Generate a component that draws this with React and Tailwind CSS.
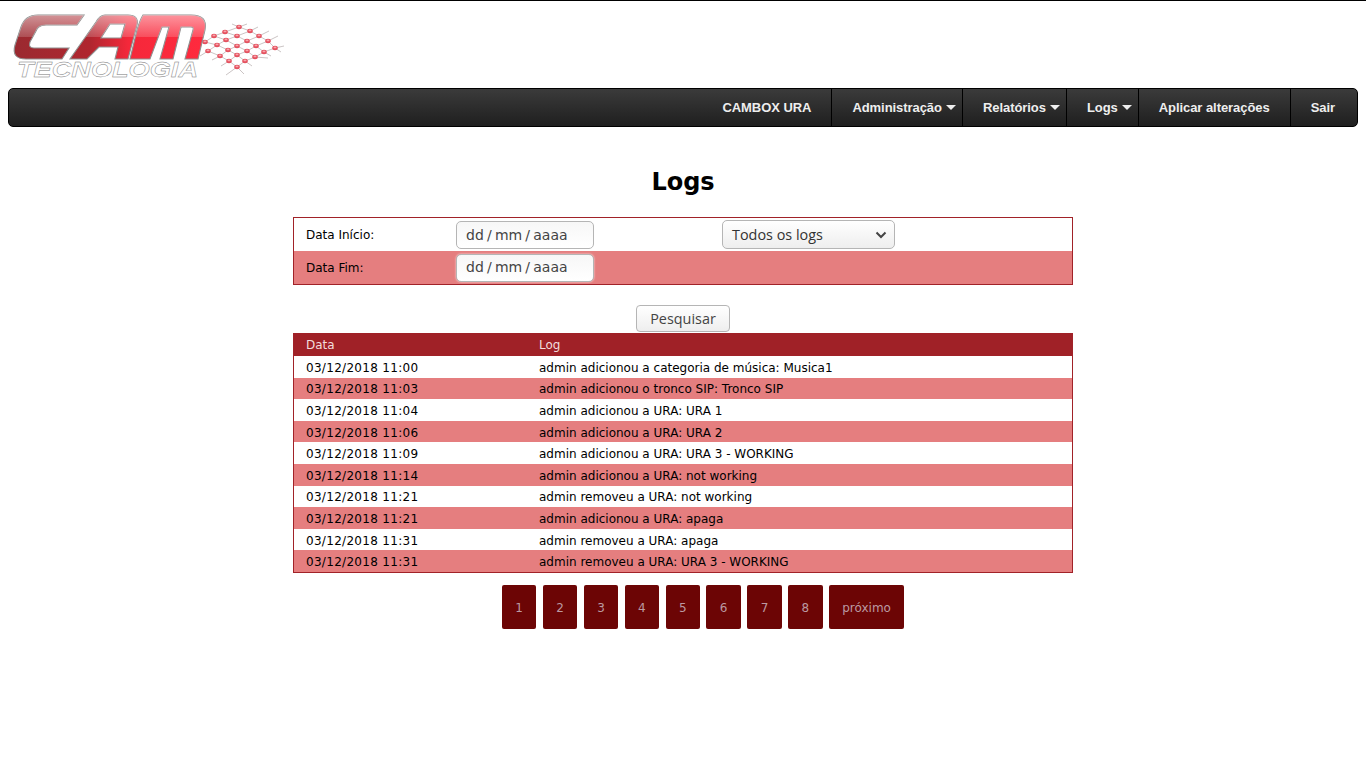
const navItems = [
  { label: "CAMBOX URA" },
  { label: "Administração", caret: true },
  { label: "Relatórios", caret: true },
  { label: "Logs", caret: true },
  { label: "Aplicar alterações" },
  { label: "Sair" },
];

const logs = [
  ["03/12/2018 11:00", "admin adicionou a categoria de música: Musica1"],
  ["03/12/2018 11:03", "admin adicionou o tronco SIP: Tronco SIP"],
  ["03/12/2018 11:04", "admin adicionou a URA: URA 1"],
  ["03/12/2018 11:06", "admin adicionou a URA: URA 2"],
  ["03/12/2018 11:09", "admin adicionou a URA: URA 3 - WORKING"],
  ["03/12/2018 11:14", "admin adicionou a URA: not working"],
  ["03/12/2018 11:21", "admin removeu a URA: not working"],
  ["03/12/2018 11:21", "admin adicionou a URA: apaga"],
  ["03/12/2018 11:31", "admin removeu a URA: apaga"],
  ["03/12/2018 11:31", "admin removeu a URA: URA 3 - WORKING"],
];

// mesh of the logo, one polyline per row
const meshRows = [
  [[239, 27], [250, 31], [259, 36], [268, 41], [275, 48]],
  [[225, 32], [237, 36], [247, 41], [256, 46], [264, 52]],
  [[214, 36], [226, 40], [237, 46], [247, 51], [255, 57]],
  [[205, 42], [217, 45], [228, 50], [237, 55], [245, 61]],
  [[208, 51], [220, 56], [229, 61], [237, 67]],
];
const meshCols = [
  [[247, 24], [239, 27], [225, 32], [214, 36], [205, 42]],
  [[258, 27], [250, 31], [237, 36], [226, 40], [217, 45], [208, 51], [200, 56]],
  [[269, 31], [259, 36], [247, 41], [237, 46], [228, 50], [220, 56], [212, 60]],
  [[278, 36], [268, 41], [256, 46], [247, 51], [237, 55], [229, 61], [221, 66]],
  [[284, 46], [275, 48], [264, 52], [255, 57], [245, 61], [237, 67], [226, 75]],
];
const meshExtra = ["M232 24 L239 27", "M268 58 L255 57", "M275 48 L281 52", "M237 67 L244 74", "M245 61 L252 66", "M264 52 L271 56"];

const toPoints = (line) => line.map((p) => p.join(",")).join(" ");

const camLetters = [
  "M38 15 H84 L77 25 H46 Q38 25 36 31 L30 42 Q28 48 34 48 H69 L62 59 H26 Q11 59 15 45 L21 27 Q25 15 38 15 Z",
  "M105 15 H128 Q139 15 137 25 L128 59 H115 L118 47 H99 L87 59 H70 L96 22 Q100 15 105 15 Z M110 24 L101 38 H121 L125 24 Z",
  "M143 15 H191 Q208 15 205 30 L198 59 H185 L193 30 Q194 27 191 27 H181 L173 59 H160 L169 27 H162 L150 59 H130 L137 30 Q140 20 143 15 Z",
];

function Logo() {
  return (
    <svg width="300" height="87" viewBox="0 1 300 87" className="block">
      <defs>
        <linearGradient id="camBase" gradientUnits="userSpaceOnUse" x1="14" y1="0" x2="205" y2="0">
          <stop offset="0" stopColor="#9a2a30" />
          <stop offset="0.4" stopColor="#b0262f" />
          <stop offset="0.6" stopColor="#f5283a" />
          <stop offset="1" stopColor="#ff2a3e" />
        </linearGradient>
        <linearGradient id="camGloss" gradientUnits="userSpaceOnUse" x1="0" y1="15" x2="0" y2="59">
          <stop offset="0" stopColor="#ffffff" stopOpacity="0.5" />
          <stop offset="0.49" stopColor="#ffffff" stopOpacity="0.18" />
          <stop offset="0.5" stopColor="#ffffff" stopOpacity="0" />
          <stop offset="1" stopColor="#ffffff" stopOpacity="0" />
        </linearGradient>
      </defs>
      <g stroke="#b4abab" strokeWidth="0.7" fill="none">
        {meshRows.concat(meshCols).map((line, i) => (
          <polyline key={i} points={toPoints(line)} />
        ))}
        {meshExtra.map((d) => (
          <path key={d} d={d} />
        ))}
      </g>
      <g>
        {meshRows.flat().map(([x, y]) => (
          <g key={`${x}-${y}`}>
            <ellipse cx={x} cy={y} rx="2.8" ry="2.2" fill="#e5505e" />
            <ellipse cx={x} cy={y - 0.6} rx="1.5" ry="0.9" fill="#f7a5ac" />
          </g>
        ))}
      </g>
      <g fillRule="evenodd">
        {camLetters.map((d) => (
          <g key={d}>
            <path d={d} fill="url(#camBase)" stroke="#8f8f8f" strokeWidth="1.1" />
            <path d={d} fill="url(#camGloss)" />
          </g>
        ))}
      </g>
      <text
        x="17"
        y="77"
        fill="#ffffff"
        stroke="#777777"
        strokeWidth="0.4"
        fontFamily="'Liberation Sans', sans-serif"
        fontStyle="italic"
        fontWeight="700"
        fontSize="22"
        textLength="181"
        lengthAdjust="spacingAndGlyphs"
      >
        TECNOLOGIA
      </text>
    </svg>
  );
}

function Caret() {
  return <span className="ml-1 inline-block h-0 w-0 border-x-[5px] border-t-[5px] border-x-transparent border-t-[#eeeeee] align-middle" />;
}

function NavBar() {
  return (
    <nav className="mx-2 flex h-[39px] justify-end rounded-[5px] border border-black bg-gradient-to-b from-[#3b3b3b] to-[#1f1f1f] pr-[2px] font-['Liberation_Sans',sans-serif]">
      {navItems.map((item, i) => (
        <a
          key={item.label}
          className={`flex items-center whitespace-nowrap border-black pl-5 text-[13px] font-bold tracking-[-0.06px] text-[#eeeeee] ${item.caret ? "pr-[6px]" : "pr-5"} ${i > 0 ? "border-l" : ""}`}
        >
          {item.label}
          {item.caret && <Caret />}
        </a>
      ))}
    </nav>
  );
}

function DateField({ glow }) {
  return (
    <div
      className={`flex h-7 w-[138px] items-center rounded-[5px] border border-[#b5b5b5] bg-gradient-to-b from-[#f7f7f7] to-white pl-[9px] text-sm text-[#444444] [word-spacing:-1.25px] ${glow ? "pb-[2px] shadow-[0_0_2px_rgba(255,255,255,0.9)]" : ""}`}
    >
      dd / mm / aaaa
    </div>
  );
}

export default function App() {
  return (
    <div className="min-h-[768px] border-t border-black bg-white font-['DejaVu_Sans',sans-serif] text-xs text-black">
      <div className="h-[87px]">
        <Logo />
      </div>
      <NavBar />

      <h1 className="mt-[41px] text-center text-2xl font-bold leading-[28px]">Logs</h1>

      <div className="mx-auto mt-[21px] w-[780px]">
        <div className="border border-[#a12228]">
          <div className="flex h-[33px] items-center bg-white pl-3">
            <span className="w-[150px]">Data Início:</span>
            <DateField />
            <div className="ml-[128px] flex h-[29px] w-[173px] items-center justify-between rounded-[5px] border border-[#b5b5b5] bg-gradient-to-b from-white to-[#eeeeee] pl-[9px] pr-[7px] font-['Open_Sans',sans-serif] text-[14.4px] text-[#333333]">
              Todos os logs
              <svg width="12" height="8" viewBox="0 0 12 8" fill="none" stroke="#444444" strokeWidth="2">
                <path d="M1.5 1.5 L6 6 L10.5 1.5" />
              </svg>
            </div>
          </div>
          <div className="flex h-[33px] items-center bg-[#e57e7f] pl-3">
            <span className="w-[150px]">Data Fim:</span>
            <DateField glow />
          </div>
        </div>

        <div className="mt-5 flex justify-center">
          <button
            type="button"
            className="h-[27px] w-[94px] rounded-[4px] border border-[#b5b5b5] bg-gradient-to-b from-white to-[#eeeeee] font-['Open_Sans',sans-serif] text-[14.4px] text-[#444444]"
          >
            Pesquisar
          </button>
        </div>

        <div className="mt-px border-x border-b border-[#a12228]">
          <div className="flex h-[23px] items-center bg-[#a02127] pl-3 text-[#f2dcdc]">
            <span className="w-[233px]">Data</span>
            <span>Log</span>
          </div>
          {logs.map(([date, text], i) => (
            <div
              key={i}
              className={`flex h-[21.6px] items-center pl-3 pt-[2px] ${i % 2 ? "bg-[#e57e7f]" : "bg-white"}`}
            >
              <span className="w-[233px] tracking-[0.3px]">{date}</span>
              <span>{text}</span>
            </div>
          ))}
        </div>

        <div className="mt-3 flex justify-center gap-[6.4px] pl-10">
          {["1", "2", "3", "4", "5", "6", "7", "8", "próximo"].map((page) => (
            <a
              key={page}
              className={`flex h-11 items-center justify-center rounded-[2px] bg-[#6c0505] pt-[2px] text-xs text-[#bb9aa2] ${page === "próximo" ? "w-[75px]" : "w-[34.5px]"}`}
            >
              {page}
            </a>
          ))}
        </div>
      </div>
    </div>
  );
}
